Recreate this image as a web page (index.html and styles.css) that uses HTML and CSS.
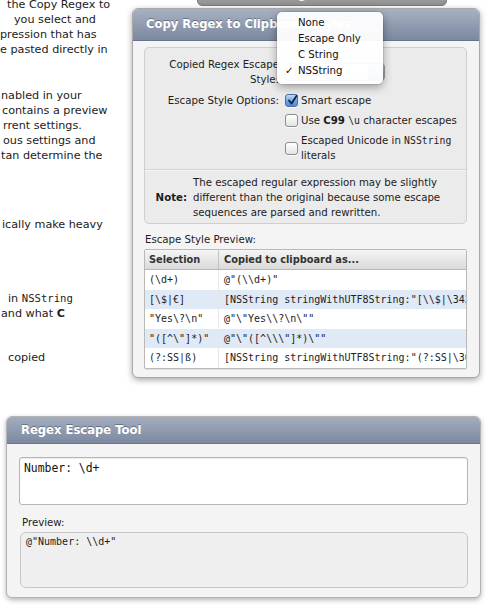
FILE: index.html
```html
<!DOCTYPE html>
<html>
<head>
<meta charset="utf-8">
<title>Regex Escape</title>
<link rel="stylesheet" href="styles.css">
</head>
<body>
<div class="doc">
  <div class="doc-text">
    <p class="pa">
      <span class="ln i7">the Copy Regex to</span>
      <span class="ln i14">you select and</span>
      <span class="ln">pression that has</span>
      <span class="ln">e pasted directly in</span>
    </p>
    <p class="pb">
      <span class="ln i1">nabled in your</span>
      <span class="ln i2">contains a preview</span>
      <span class="ln i3">rrent settings.</span>
      <span class="ln i3">ous settings and</span>
      <span class="ln i1">tan determine the</span>
    </p>
    <p class="pc">
      <span class="ln i2">ically make heavy</span>
    </p>
    <p class="pd">
      <span class="ln i8">in <span class="mono">NSString</span></span>
      <span class="ln i1">and what <b>C</b></span>
    </p>
    <p class="pe">
      <span class="ln i8">copied</span>
    </p>
  </div>

  <div class="stub">RegexKitLite</div>

  <div class="sheet">
    <div class="sheet-title">Copy Regex to Clipboard Styles</div>
    <div class="sheet-body">
      <div class="group">
        <div class="row row-style">
          <div class="lbl">Copied Regex Escape<br>Style:</div>
          <div class="ctl">
            <div class="popup"><span class="popup-text">NSString</span><span class="popup-arrows"></span></div>
          </div>
        </div>
        <div class="row row-opts">
          <div class="lbl lbl-one">Escape Style Options:</div>
          <div class="opts">
            <div class="opt">
              <span class="cb cb-on"><svg viewBox="0 0 13 13" width="13" height="13"><path d="M3 6.5 L5.6 9.6 L10.6 1.8" fill="none" stroke="#15254a" stroke-width="1.9" stroke-linecap="round" stroke-linejoin="round"/></svg></span>
              <span class="opt-text">Smart escape</span>
            </div>
            <div class="opt">
              <span class="cb"></span>
              <span class="opt-text">Use <b>C99</b> <code>\u</code> character escapes</span>
            </div>
            <div class="opt opt-two">
              <span class="cb"></span>
              <span class="opt-text">Escaped Unicode in <code>NSString</code><br>literals</span>
            </div>
          </div>
        </div>
        <div class="note">
          <div class="note-lbl">Note:</div>
          <div class="note-txt">The escaped regular expression may be slightly<br>different than the original because some escape<br>sequences are parsed and rewritten.</div>
        </div>
      </div>
      <div class="caption">Escape Style Preview:</div>
      <table class="grid">
        <colgroup><col class="c1"><col class="c2"></colgroup>
        <thead>
          <tr><th>Selection</th><th>Copied to clipboard as...</th></tr>
        </thead>
        <tbody>
          <tr><td>(\d+)</td><td>@"(\\d+)"</td></tr>
          <tr class="alt"><td>[\$|€]</td><td>[NSString stringWithUTF8String:"[\\$|\342\202\254]"]</td></tr>
          <tr><td>"Yes\?\n"</td><td>@"\"Yes\\?\n\""</td></tr>
          <tr class="alt"><td>"([^\"]*)"</td><td>@"\"([^\\\"]*)\""</td></tr>
          <tr><td>(?:SS|ß)</td><td>[NSString stringWithUTF8String:"(?:SS|\303\237)"]</td></tr>
        </tbody>
      </table>
    </div>
  </div>

  <div class="menu">
    <div class="mi">None</div>
    <div class="mi">Escape Only</div>
    <div class="mi">C String</div>
    <div class="mi"><span class="check">✓</span>NSString</div>
  </div>
</div>

<section class="panel">
  <div class="panel-title">Regex Escape Tool</div>
  <div class="panel-body">
    <div class="input">Number: \d+</div>
    <div class="plabel">Preview:</div>
    <div class="preview">@"Number: \\d+"</div>
  </div>
</section>
</body>
</html>
```

FILE: styles.css
```css
* { box-sizing: border-box; }
html, body { margin: 0; padding: 0; background: #fff; }
body {
  width: 489px;
  height: 606px;
  overflow: hidden;
  font-family: "DejaVu Sans", sans-serif;
  color: #1c1c1c;
}

/* background document */
.doc { position: relative; height: 416px; }
.doc-text {
  display: flow-root;
  width: 132px;
  overflow: hidden;
  white-space: nowrap;
  font-size: 11.2px;
  line-height: 15px;
  color: #222;
}
.doc-text p { margin: 0; }
.doc-text .pa { margin-top: -3px; }
.doc-text .pb { margin-top: 31px; }
.doc-text .pc { margin-top: 54px; }
.doc-text .pd { margin-top: 59px; }
.doc-text .pe { margin-top: 29px; }
.ln { display: block; }
.i1 { padding-left: 1px; }
.i2 { padding-left: 2px; }
.i3 { padding-left: 3px; }
.i7 { padding-left: 7px; }
.i8 { padding-left: 8px; }
.i14 { padding-left: 14px; }
.mono { font-family: "DejaVu Sans Mono", monospace; font-size: 10.6px; }

/* tab stub behind */
.stub {
  position: absolute;
  left: 197px;
  top: -12px;
  width: 250px;
  height: 18px;
  line-height: 14px;
  text-align: center;
  font-size: 11px;
  font-weight: bold;
  color: #f2f2f2;
  background: linear-gradient(#b5b5b5, #8e8e8e);
  border: 1px solid #7b7b7b;
  border-radius: 0 0 5px 5px;
  overflow: hidden;
}

/* sheet dialog */
.sheet {
  position: absolute;
  left: 132px;
  top: 8px;
  width: 348px;
  height: 370px;
  background: #f4f4f4;
  border: 1px solid #a9a9a9;
  border-radius: 6px;
  box-shadow: 0 2px 6px rgba(0,0,0,.35);
}
.sheet-title {
  height: 32px;
  line-height: 30px;
  padding-left: 13px;
  font-size: 11.6px;
  font-weight: bold;
  color: #fff;
  text-shadow: 0 -1px 0 rgba(40,50,70,.45);
  background: linear-gradient(#a8b1c2, #7b889f);
  border-radius: 5px 5px 0 0;
  border-bottom: 1px solid #66738b;
  white-space: nowrap;
  overflow: hidden;
}
.sheet-body {
  padding: 6px 12px 10px 11px;
  font-size: 10.2px;
}
.group {
  background: #ebebeb;
  border: 1px solid #cfcfcf;
  border-radius: 5px;
  padding-top: 9px;
}
.row { display: flex; }
.lbl {
  width: 134px;
  flex: none;
  text-align: right;
  line-height: 15px;
  color: #1c1c1c;
}
.row-style { height: 30px; }
.ctl { margin-left: 6px; display: flex; align-items: center; }
.popup {
  width: 100px;
  height: 18px;
  border: 1px solid #9c9c9c;
  border-radius: 4px;
  background: linear-gradient(#ffffff, #e6e6e6);
  display: flex;
  align-items: center;
  overflow: hidden;
}
.popup-text { flex: 1; padding-left: 8px; }
.popup-arrows {
  width: 16px;
  height: 100%;
  background: linear-gradient(#b3cff0, #6b9ad8);
}
.row-opts { margin-top: 6px; }
.opts { margin-left: 6px; display: flex; flex-direction: column; gap: 5px; }
.opt { display: flex; align-items: center; line-height: 15px; }
.opt-text { margin-left: 3px; white-space: nowrap; }
.cb {
  width: 13px;
  height: 13px;
  flex: none;
  border: 1px solid #8d8d8d;
  border-radius: 3px;
  background: linear-gradient(#ffffff, #e4e4e4);
  box-shadow: 0 1px 0 rgba(255,255,255,.8);
  position: relative;
}
.cb-on {
  border-color: #4b6fa4;
  background: linear-gradient(#c4dcf6, #6ea3e4 55%, #4d8bdc);
}
.cb-on svg { position: absolute; left: 0; top: -1px; }
code { font-family: "DejaVu Sans Mono", monospace; font-size: 9.8px; }

.note {
  margin-top: 6px;
  border-top: 1px solid #d4d4d4;
  box-shadow: inset 0 1px 0 #f6f6f6;
  display: flex;
  align-items: center;
  padding: 5px 0 3px;
}
.note-lbl { width: 42px; text-align: right; font-weight: bold; flex: none; }
.note-txt { margin-left: 6px; line-height: 15px; white-space: nowrap; }

.caption { margin-top: 8px; line-height: 15px; padding-left: 1px; }

.grid {
  margin-top: 2px;
  width: 323px;
  table-layout: fixed;
  border-collapse: separate;
  border-spacing: 0;
  border: 1px solid #b9b9b9;
  border-radius: 2px;
  box-shadow: 0 1px 1px rgba(0,0,0,.08);
  background: #fff;
}
.grid .c1 { width: 73px; }
.grid th {
  height: 20px;
  padding: 0 4px;
  text-align: left;
  font-size: 9.8px;
  font-weight: bold;
  color: #333;
  background: linear-gradient(#f5f5f5, #dadada);
  border-bottom: 1px solid #b5b5b5;
  white-space: nowrap;
}
.grid th + th { border-left: 1px solid #c2c2c2; padding-left: 5px; }
.grid td {
  height: 19.5px;
  padding: 0 4px;
  font-family: "DejaVu Sans Mono", monospace;
  font-size: 10px;
  color: #222;
  white-space: nowrap;
  overflow: hidden;
  text-overflow: clip;
}
.grid td + td { border-left: 1px solid #e8e8e8; padding-left: 5px; }
.grid tr.alt td { background: #e0e9f6; }

/* popup menu */
.menu {
  position: absolute;
  left: 277px;
  top: 12px;
  width: 106px;
  height: 72px;
  padding-top: 3px;
  background: rgba(255,255,255,.95);
  border-radius: 5px;
  box-shadow: 0 3px 10px rgba(0,0,0,.35), 0 0 0 1px rgba(0,0,0,.08);
  font-size: 10.2px;
  color: #111;
}
.mi { position: relative; height: 16px; line-height: 16px; padding-left: 21px; white-space: nowrap; }
.check { position: absolute; left: 8px; top: 0; }

/* bottom panel */
.panel {
  margin-left: 6px;
  width: 475px;
  height: 182px;
  background: #f4f4f4;
  border: 1px solid #b3b3b3;
  border-radius: 6px;
  box-shadow: 0 2px 5px rgba(0,0,0,.3);
  overflow: hidden;
}
.panel-title {
  height: 27px;
  line-height: 26px;
  padding-left: 14px;
  font-size: 11.6px;
  font-weight: bold;
  color: #fff;
  text-shadow: 0 -1px 0 rgba(40,50,70,.45);
  background: linear-gradient(#a4adbf, #7c89a0);
  border-bottom: 1px solid #6a778e;
}
.panel-body { padding: 13px 12px 9px 12px; }
.input {
  height: 48px;
  background: #fff;
  border: 1px solid #b5b5b5;
  border-radius: 3px;
  padding: 3px 4px;
  font-family: "DejaVu Sans Mono", monospace;
  font-size: 11.4px;
  line-height: 14px;
  color: #111;
  box-shadow: inset 0 1px 1px rgba(0,0,0,.08);
}
.plabel { margin-top: 10px; font-size: 10.2px; line-height: 15px; padding-left: 3px; }
.preview {
  margin-top: 2px;
  margin-left: 1px;
  height: 56px;
  background: #efefef;
  border: 1px solid #c6c6c6;
  border-radius: 6px;
  padding: 2px 5px;
  font-family: "DejaVu Sans Mono", monospace;
  font-size: 10px;
  line-height: 13px;
  color: #222;
}
```
